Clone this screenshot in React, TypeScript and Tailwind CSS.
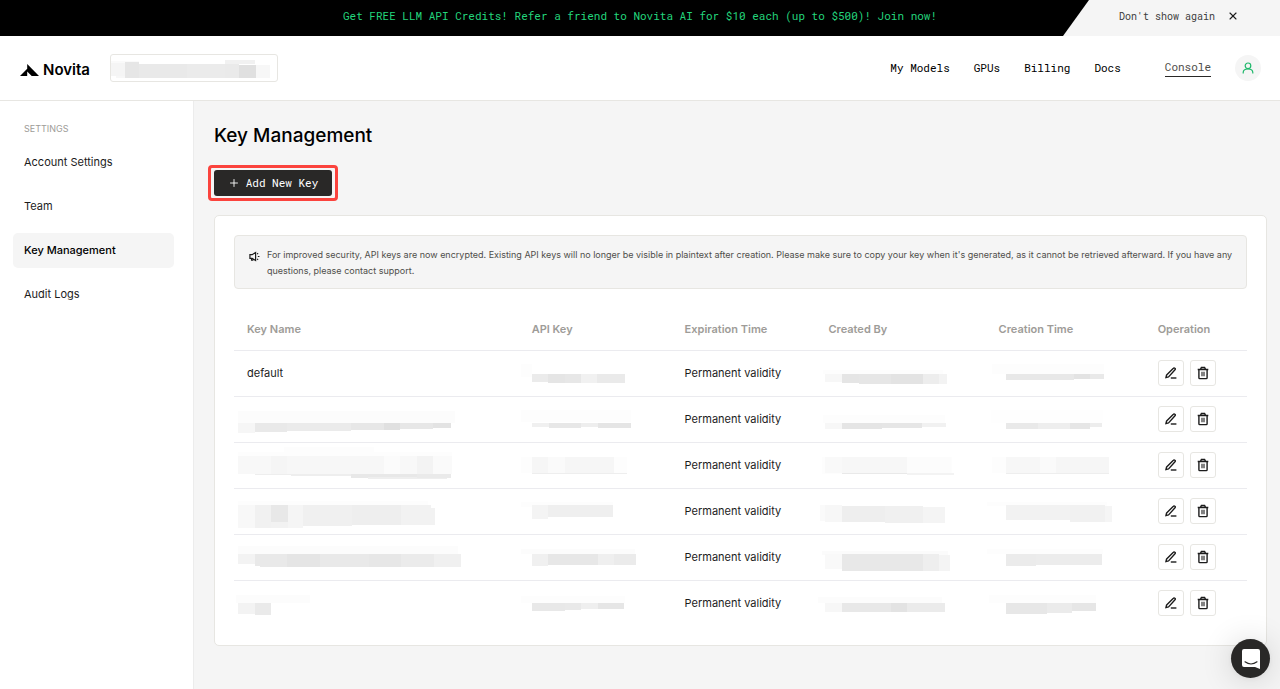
import React from "react";
import { X, Plus } from "lucide-react";

type Block = [x: number, y: number, w: number, h: number, fill: string];

interface KeyRow {
  id: string;
  name?: string;
  nameMask?: Block[];
  keyMask: Block[];
  creatorMask: Block[];
  timeMask: Block[];
}

const rows: KeyRow[] = [
  {
    id: "1",
    name: "default",
    keyMask: [[2, 13, 11, 13, "#fdfdfd"], [13, 23, 16, 8, "#ebebeb"], [29, 23, 17, 9, "#e5e5e5"], [46, 23, 16, 9, "#e7e7e7"], [62, 23, 16, 9, "#f1f1f1"], [78, 23, 28, 9, "#eaeaea"]],
    creatorMask: [[8, 19, 120, 4, "#fdfdfd"], [10, 23, 17, 8, "#f7f7f7"], [27, 23, 17, 9, "#e5e5e5"], [44, 23, 32, 10, "#e6e6e6"], [76, 23, 32, 10, "#e3e3e3"], [108, 23, 16, 10, "#ededed"], [124, 23, 8, 10, "#f3f3f3"]],
    timeMask: [[6, 13, 112, 10, "#fdfdfd"], [20, 23, 68, 6, "#e8e8e8"], [88, 23, 16, 5, "#e3e3e3"], [104, 23, 14, 5, "#e9e9e9"]],
  },
  {
    id: "2",
    nameMask: [[4, 14, 217, 12, "#fcfcfc"], [4, 26, 17, 10, "#f6f6f6"], [21, 26, 32, 9, "#e9e9e9"], [53, 26, 64, 8, "#ebebeb"], [117, 26, 33, 7, "#e7e7e7"], [150, 26, 16, 7, "#e0e0e0"], [166, 26, 33, 6, "#e7e7e7"], [199, 26, 18, 5, "#e3e3e3"]],
    keyMask: [[2, 13, 110, 12, "#fdfdfd"], [13, 26, 17, 4, "#f0f0f0"], [30, 26, 32, 5, "#e7e7e7"], [62, 26, 17, 4, "#eeeeee"], [79, 26, 33, 5, "#e5e5e5"]],
    creatorMask: [[8, 18, 122, 8, "#fdfdfd"], [10, 26, 17, 6, "#f7f7f7"], [27, 26, 40, 6, "#e5e5e5"], [67, 26, 40, 5, "#e6e6e6"], [107, 26, 24, 4, "#f1f1f1"]],
    timeMask: [[5, 13, 112, 13, "#fefefe"], [20, 26, 32, 6, "#e9e9e9"], [52, 26, 32, 6, "#eeeeee"], [84, 26, 20, 6, "#e6e6e6"], [104, 26, 12, 4, "#ededed"]],
  },
  {
    id: "3",
    nameMask: [[50, 4, 90, 6, "#fdfdfd"], [4, 9, 214, 5, "#fdfdfd"], [4, 13, 33, 18, "#f8f8f8"], [37, 13, 16, 18, "#f5f5f5"], [53, 13, 97, 18, "#f7f7f7"], [150, 13, 16, 18, "#fbfbfb"], [166, 13, 17, 18, "#f8f8f8"], [183, 13, 16, 18, "#f3f3f3"], [199, 13, 19, 18, "#fafafa"], [21, 31, 36, 1, "#eeeeee"], [57, 31, 60, 2, "#eeeeee"], [117, 31, 66, 4, "#e8e8e8"], [134, 34, 79, 2, "#eeeeee"], [183, 31, 34, 4, "#eaeaea"]],
    keyMask: [[2, 14, 106, 16, "#fdfdfd"], [13, 14, 16, 16, "#f6f6f6"], [29, 14, 17, 16, "#fafafa"], [46, 14, 49, 16, "#f6f6f6"], [13, 30, 95, 1, "#eeeeee"]],
    creatorMask: [[7, 14, 130, 17, "#fdfdfd"], [10, 14, 17, 16, "#f9f9f9"], [27, 14, 65, 16, "#f7f7f7"], [92, 14, 44, 16, "#fcfcfc"], [27, 30, 65, 1, "#e9e9e9"], [92, 30, 47, 2, "#f3f3f3"]],
    timeMask: [[6, 14, 117, 16, "#fdfdfd"], [20, 14, 34, 16, "#f7f7f7"], [54, 14, 16, 16, "#fafafa"], [70, 14, 53, 16, "#f6f6f6"], [20, 30, 103, 1, "#eeeeee"]],
  },
  {
    id: "4",
    nameMask: [[4, 12, 190, 6, "#fdfdfd"], [4, 16, 17, 23, "#f8f8f8"], [21, 16, 16, 23, "#f1f1f1"], [37, 16, 17, 17, "#e8e8e8"], [37, 33, 17, 6, "#f2f2f2"], [54, 16, 15, 23, "#f5f5f5"], [69, 16, 49, 21, "#f0f0f0"], [118, 16, 49, 20, "#eeeeee"], [167, 16, 30, 20, "#f2f2f2"], [197, 19, 4, 17, "#f2f2f2"]],
    keyMask: [[2, 13, 92, 5, "#fdfdfd"], [13, 16, 16, 14, "#f4f4f4"], [29, 16, 65, 12, "#efefef"]],
    creatorMask: [[5, 16, 20, 16, "#fafafa"], [10, 16, 17, 17, "#f7f7f7"], [27, 17, 43, 16, "#eeeeee"], [70, 17, 38, 17, "#f0f0f0"], [108, 18, 22, 16, "#f4f4f4"]],
    timeMask: [[1, 13, 120, 4, "#fdfdfd"], [20, 16, 64, 15, "#f2f2f2"], [84, 16, 35, 17, "#f1f1f1"], [119, 17, 7, 16, "#f5f5f5"]],
  },
  {
    id: "5",
    nameMask: [[4, 11, 220, 8, "#fcfcfc"], [4, 19, 17, 10, "#f3f3f3"], [21, 19, 32, 12, "#e9e9e9"], [26, 31, 27, 1, "#e9e9e9"], [53, 19, 33, 13, "#e5e5e5"], [86, 19, 49, 13, "#e9e9e9"], [135, 19, 32, 13, "#e7e7e7"], [167, 19, 33, 13, "#ebebeb"], [200, 19, 27, 13, "#f0f0f0"]],
    keyMask: [[2, 14, 114, 5, "#fcfcfc"], [13, 19, 16, 12, "#f0f0f0"], [29, 19, 50, 11, "#e7e7e7"], [79, 19, 16, 11, "#efefef"], [95, 19, 22, 11, "#ebebeb"]],
    creatorMask: [[7, 16, 126, 4, "#fbfbfb"], [10, 19, 17, 15, "#f9f9f9"], [27, 19, 81, 17, "#e8e8e8"], [108, 19, 16, 17, "#eeeeee"], [124, 20, 11, 16, "#f4f4f4"]],
    timeMask: [[1, 14, 116, 5, "#fdfdfd"], [20, 19, 30, 12, "#ebebeb"], [50, 19, 66, 11, "#ececec"]],
  },
  {
    id: "6",
    nameMask: [[2, 14, 74, 8, "#fcfcfc"], [4, 22, 17, 11, "#f3f3f3"], [21, 22, 16, 12, "#eaeaea"]],
    keyMask: [[2, 15, 104, 7, "#fdfdfd"], [13, 22, 33, 8, "#e8e8e8"], [46, 22, 16, 7, "#e9e9e9"], [62, 22, 17, 6, "#efefef"], [79, 22, 26, 6, "#e6e6e6"]],
    creatorMask: [[3, 16, 124, 6, "#fcfcfc"], [10, 22, 17, 9, "#f7f7f7"], [27, 22, 49, 9, "#e8e8e8"], [76, 22, 16, 9, "#e3e3e3"], [92, 22, 38, 9, "#ebebeb"]],
    timeMask: [[3, 14, 107, 8, "#fdfdfd"], [20, 22, 41, 11, "#e7e7e7"], [61, 22, 25, 10, "#ebebeb"], [86, 22, 24, 8, "#e6e6e6"]],
  },
];

function Mask({ blocks }: { blocks: Block[] }) {
  return (
    <svg width="100%" height="45" className="block overflow-visible" shapeRendering="crispEdges" aria-hidden="true">
      {blocks.map(([x, y, w, h, fill]) => (
        <rect key={`${x}-${y}-${w}`} x={x} y={y} width={w} height={h} fill={fill} />
      ))}
    </svg>
  );
}

function PencilIcon() {
  return (
    <svg width="14" height="14" viewBox="0 0 14 14" fill="none" stroke="#1c1c1c" strokeWidth="1.4" strokeLinejoin="round" aria-hidden="true">
      <path d="M1.9 11.7 2.6 9 9.4 2.2a.9.9 0 0 1 1.4 0l.2.2a.9.9 0 0 1 0 1.4L4.6 10.9Z" />
      <path d="M6.8 12h5.6" />
    </svg>
  );
}

function TrashIcon() {
  return (
    <svg width="14" height="14" viewBox="0 0 14 14" fill="none" stroke="#1c1c1c" strokeWidth="1.4" aria-hidden="true">
      <path d="M1.7 3.5h10.6M4.5 3.3l.9-1.8h3.2l.9 1.8M2.9 3.5v8.3q0 .8.8.8h6.6q.8 0 .8-.8V3.5" />
      <path d="M6 5.8v4.4M8 5.8v4.4" strokeWidth="1.1" />
    </svg>
  );
}

function MegaphoneIcon() {
  return (
    <svg width="11" height="11" viewBox="0 0 12 12" fill="none" stroke="#1c1c1c" strokeWidth="1.3" aria-hidden="true">
      <path d="M1 4h2.4L7.2 1.6v8.8L3.4 8H1ZM2.8 8v2h2M9.6 6h1.8M8.9 3.4l1-.9M8.9 8.6l1 .9" />
    </svg>
  );
}

const navLinks = ["My Models", "GPUs", "Billing", "Docs"];
const sideLinks = ["Account Settings", "Team", "Key Management", "Audit Logs"];
const mono = "font-['Roboto_Mono','Liberation_Mono',monospace]";

const columns: { label: string; width: string }[] = [
  { label: "Key Name", width: "w-[28.1%]" },
  { label: "API Key", width: "w-[15.1%]" },
  { label: "Expiration Time", width: "w-[14.2%]" },
  { label: "Created By", width: "w-[16.8%]" },
  { label: "Creation Time", width: "w-[15.7%]" },
  { label: "Operation", width: "w-[10.1%]" },
];

const accountMask: Block[] = [
  [0, 6, 28, 3, "#fafafa"], [0, 8, 14, 13, "#f5f5f5"], [5, 21, 9, 2, "#f7f7f7"],
  [14, 7, 14, 16, "#e6e6e6"], [28, 9, 48, 14, "#e9e9e9"], [76, 9, 38, 14, "#ebebeb"],
  [114, 5, 30, 4, "#f1f1f1"], [114, 9, 14, 14, "#eaeaea"], [128, 10, 17, 13, "#e0e0e0"], [145, 10, 14, 13, "#f7f7f7"],
];

export default function App() {
  return (
    <div className="flex min-h-screen flex-col bg-white font-[Inter,sans-serif] text-[#1c1c1c]">
      <div className="relative flex h-9 items-center justify-center bg-black">
        <a href="#refer" className={`${mono} pb-1 text-[11px] text-[#23d57c]`}>
          Get FREE LLM API Credits! Refer a friend to Novita AI for $10 each (up to $500)! Join now!
        </a>
        <div className="absolute inset-y-0 right-0 flex w-[217px] items-center justify-end gap-3 bg-[#f5f5f5] pr-[41px] pb-1 [clip-path:polygon(26px_0,100%_0,100%_100%,0_100%)]">
          <button type="button" className={`${mono} text-[10px] text-[#3d3d3d]`}>Don't show again</button>
          <button type="button" aria-label="Close banner"><X size={12} strokeWidth={2.2} /></button>
        </div>
      </div>

      <header className="flex h-[65px] items-center border-b border-[#e7e6e2] pr-[19px] pl-5">
        <a href="#home" className="flex items-center gap-1 pt-1 text-[15px] font-semibold text-black">
          <svg width="19" height="12" viewBox="0 0 19 12" aria-hidden="true">
            <path d="M7.2 0v4.7L0 12h7.2V7.5l4.5 4.5H19Z" />
          </svg>
          Novita
        </a>
        <button type="button" aria-label="Switch account" className="ml-5 h-7 w-[168px] rounded-[3px] border border-[#e7e6e2] bg-white">
          <svg width="160" height="26" shapeRendering="crispEdges" className="block" aria-hidden="true">
            {accountMask.map(([x, y, w, h, fill]) => (
              <rect key={`${x}-${y}`} x={x} y={y} width={w} height={h} fill={fill} />
            ))}
          </svg>
        </button>
        <nav className={`${mono} ml-auto flex items-center gap-6 text-[11px] text-black`}>
          {navLinks.map((label) => (
            <a key={label} href="#nav">{label}</a>
          ))}
          <a href="#console" className="ml-5 border-b border-[#292827] text-[#4f4e4a]">Console</a>
          <button type="button" aria-label="Profile" className="flex size-[26px] items-center justify-center rounded-full bg-[#f5f5f5]">
            <svg width="12" height="12" viewBox="0 0 12 12" fill="none" stroke="#1fb86b" strokeWidth="1.2" aria-hidden="true">
              <circle cx="6" cy="3.8" r="2.8" />
              <path d="M1.2 11.6V10.5C1.2 8.4 3 7 6 7s4.8 1.4 4.8 3.5v1.1" />
            </svg>
          </button>
        </nav>
      </header>

      <div className="flex flex-1">
        <aside className="w-[194px] shrink-0 border-r border-[#ececec] pt-5 pr-[19px] pl-[13px]">
          <h2 className="px-[11px] text-[9px] leading-4 text-[#9e9c98]">SETTINGS</h2>
          <nav className="mt-2 flex flex-col gap-[9px] text-[11px]">
            {sideLinks.map((label) => (
              <a
                key={label}
                href="#settings"
                className={label === "Key Management" ? "flex h-[35px] items-center rounded-[5px] bg-[#f5f5f5] px-[11px] font-medium text-black" : "flex h-[35px] items-center px-[11px]"}
              >
                {label}
              </a>
            ))}
          </nav>
        </aside>

        <main className="min-w-0 flex-1 bg-[#f5f5f5] pt-[21px] pr-[13px] pb-[42px] pl-5">
          <h1 className="text-[19px] leading-7 font-medium text-black">Key Management</h1>
          <div className="mt-[15px] -ml-1.5 w-fit rounded-[4px] border-[3px] border-[#fb433d] px-[3px] py-[2px]">
            <button type="button" className={`${mono} flex h-[26px] w-[118px] items-center justify-center gap-1.5 rounded-[3px] bg-[#292827] text-[11px] text-white`}>
              <Plus size={12} strokeWidth={1.8} />
              Add New Key
            </button>
          </div>

          <section className="mt-3.5 rounded-[5px] border border-[#e7e6e2] bg-white px-[19px] py-[19px]">
            <div className="flex gap-[7px] rounded-[4px] border border-[#e7e6e2] bg-[#f5f5f5] pt-[11px] pr-2 pb-[9px] pl-3.5 text-[9px] leading-4 text-[#4f4e4a]">
              <span className="flex h-[18px] items-center"><MegaphoneIcon /></span>
              <p>
                For improved security, API keys are now encrypted. Existing API keys will no longer be visible in plaintext after creation. Please make sure to copy your key when it's generated, as it cannot be retrieved afterward. If you have any questions, please contact support.
              </p>
            </div>

            <table className="mt-[19px] w-full table-fixed border-collapse text-left text-[11px]">
              <thead>
                <tr className="h-[42px] border-b border-[#ebebef] text-[#9e9c98]">
                  {columns.map(({ label, width }) => (
                    <th key={label} scope="col" className={`${width} px-[13px] font-semibold`}>{label}</th>
                  ))}
                </tr>
              </thead>
              <tbody>
                {rows.map((row) => (
                  <tr key={row.id} className="h-[46px] border-b border-[#ebebef] last:border-0">
                    {row.name ? <td className="px-[13px]">{row.name}</td> : <td className="p-0"><Mask blocks={row.nameMask ?? []} /></td>}
                    <td className="p-0"><Mask blocks={row.keyMask} /></td>
                    <td className="px-[13px] whitespace-nowrap">Permanent validity</td>
                    <td className="p-0"><Mask blocks={row.creatorMask} /></td>
                    <td className="p-0"><Mask blocks={row.timeMask} /></td>
                    <td className="px-[13px]">
                      <div className="flex gap-1.5">
                        <button type="button" aria-label="Edit key" className="flex size-[26px] shrink-0 items-center justify-center rounded-[3px] border border-[#e7e6e2]"><PencilIcon /></button>
                        <button type="button" aria-label="Delete key" className="flex size-[26px] shrink-0 items-center justify-center rounded-[3px] border border-[#e7e6e2]"><TrashIcon /></button>
                      </div>
                    </td>
                  </tr>
                ))}
              </tbody>
            </table>
          </section>
        </main>
      </div>

      <button type="button" aria-label="Open chat" className="fixed right-[10px] bottom-[11px] flex size-[39px] items-center justify-center rounded-full bg-[#292827] shadow-[0_1px_6px_rgba(0,0,0,0.06),0_2px_32px_rgba(0,0,0,0.16)]">
        <svg width="18" height="20" viewBox="0 0 18 20" aria-hidden="true">
          <path d="M2 0h14a2 2 0 0 1 2 2v18l-5-2H2a2 2 0 0 1-2-2V2a2 2 0 0 1 2-2Z" fill="#fff" />
          <path d="M3 12.8q6 4.4 12 0" fill="none" stroke="#292827" strokeWidth="1.2" strokeLinecap="round" />
        </svg>
      </button>
    </div>
  );
}
